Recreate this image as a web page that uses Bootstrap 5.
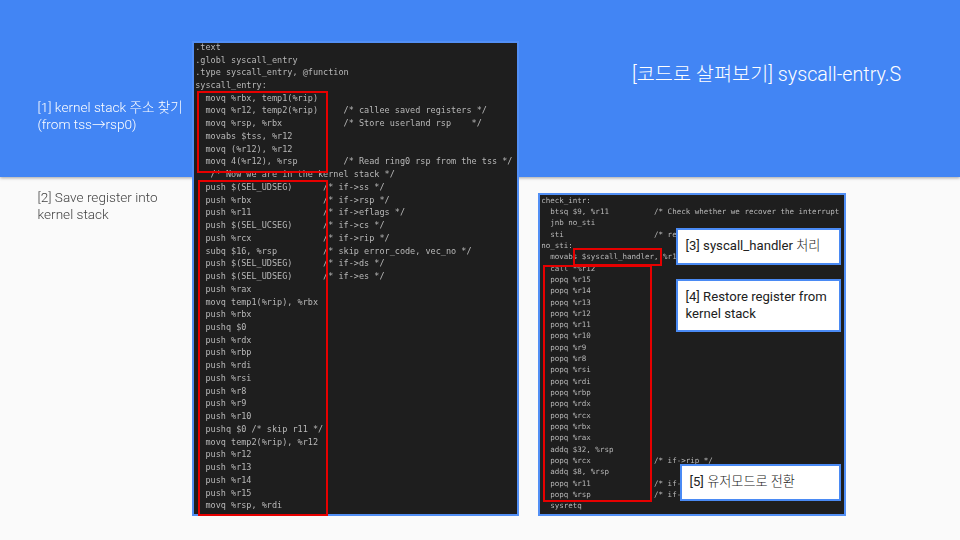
<!DOCTYPE html>
<html lang="ko">
<head>
<meta charset="utf-8">
<title>syscall-entry.S</title>
<link href="https://cdn.jsdelivr.net/npm/bootstrap@5.3.0/dist/css/bootstrap.min.css" rel="stylesheet">
<style>
html,body{margin:0;width:960px;height:540px;overflow:hidden;background:#fafafa}
.slide-canvas{width:960px;height:540px;font-family:Roboto,"Noto Sans CJK KR",sans-serif}
.slide-band{position:absolute;left:0;top:0;width:960px;height:177px;background:#4285f4;box-shadow:0 1px 3px rgba(0,0,0,.35)}
.note-col{width:192px;padding:99px 0 0 37.5px;font-size:13.6px;line-height:16.5px;z-index:1;filter:blur(.2px)}
.note-one{color:#fff;height:90px;white-space:nowrap;font-weight:300}
.note-two{color:#434343;font-weight:300}
.code-panel{background:#1e1e1e;border:2px solid #528ff5;z-index:1}
.panel-left{width:327px;height:475px;margin-top:41px}
.right-col{width:422px;margin-left:19px;z-index:1}
.slide-title{padding:63px 0 0 94px;height:193px;color:#fff;font-size:19.7px;line-height:24px;font-weight:300;white-space:nowrap}
.panel-right{width:308px;height:323px}
.code-text{margin:0;font-family:"DejaVu Sans Mono",monospace;color:#b8b8b8;filter:blur(.5px);overflow:hidden}
.text-left{font-size:8.5px;line-height:12.74px;padding:0 0 0 1.2px;margin-top:-2.2px}
.text-right{font-size:7.5px;line-height:11.31px;padding:0 0 0 1.2px;margin-top:-.3px}
.red-box{position:absolute;border:2px solid #e60000}
.red-a{left:3px;top:48px;width:131px;height:82px}
.red-b{left:4px;top:137px;width:130px;height:336px}
.red-c{left:33px;top:53px;width:89px;height:18px}
.red-d{left:3px;top:69.5px;width:109px;height:237px}
.call-box{position:absolute;background:#fff;border:2px solid #4a8af4;color:#212121;font-size:13.15px;line-height:16.5px;padding:0 0 0 7.5px;display:flex;align-items:center}
.call-a{left:136px;top:33px;width:165px;height:37px}
.call-b{left:136px;top:84px;width:165px;height:53px}
.call-c{left:140px;top:269px;width:161px;height:37px}
.hangul{font-weight:300}
</style>
</head>
<body>
<div class="slide-canvas position-relative d-flex">
  <div class="slide-band"></div>
  <div class="note-col flex-shrink-0 position-relative">
    <div class="note-one">[1] kernel stack 주소 찾기<br>(from tss→rsp0)</div>
    <div class="note-two">[2] Save register into<br>kernel stack</div>
  </div>
  <div class="code-panel panel-left position-relative flex-shrink-0">
<pre class="code-text text-left">.text
.globl syscall_entry
.type syscall_entry, @function
syscall_entry:
  movq %rbx, temp1(%rip)
  movq %r12, temp2(%rip)     /* callee saved registers */
  movq %rsp, %rbx            /* Store userland rsp    */
  movabs $tss, %r12
  movq (%r12), %r12
  movq 4(%r12), %rsp         /* Read ring0 rsp from the tss */
   /* Now we are in the kernel stack */
  push $(SEL_UDSEG)      /* if-&gt;ss */
  push %rbx              /* if-&gt;rsp */
  push %r11              /* if-&gt;eflags */
  push $(SEL_UCSEG)      /* if-&gt;cs */
  push %rcx              /* if-&gt;rip */
  subq $16, %rsp         /* skip error_code, vec_no */
  push $(SEL_UDSEG)      /* if-&gt;ds */
  push $(SEL_UDSEG)      /* if-&gt;es */
  push %rax
  movq temp1(%rip), %rbx
  push %rbx
  pushq $0
  push %rdx
  push %rbp
  push %rdi
  push %rsi
  push %r8
  push %r9
  push %r10
  pushq $0 /* skip r11 */
  movq temp2(%rip), %r12
  push %r12
  push %r13
  push %r14
  push %r15
  movq %rsp, %rdi</pre>
    <div class="red-box red-a"></div>
    <div class="red-box red-b"></div>
  </div>
  <div class="right-col flex-shrink-0 position-relative">
    <div class="slide-title">[코드로 살펴보기] syscall-entry.S</div>
    <div class="code-panel panel-right position-relative">
<pre class="code-text text-right">check_intr:
  btsq $9, %r11          /* Check whether we recover the interrupt
  jnb no_sti
  sti                    /* re-enable interrupts */
no_sti:
  movabs $syscall_handler, %r12
  call *%r12
  popq %r15
  popq %r14
  popq %r13
  popq %r12
  popq %r11
  popq %r10
  popq %r9
  popq %r8
  popq %rsi
  popq %rdi
  popq %rbp
  popq %rdx
  popq %rcx
  popq %rbx
  popq %rax
  addq $32, %rsp
  popq %rcx              /* if-&gt;rip */
  addq $8, %rsp
  popq %r11              /* if-&gt;eflags */
  popq %rsp              /* if-&gt;rsp */
  sysretq</pre>
      <div class="red-box red-c"></div>
      <div class="red-box red-d"></div>
      <div class="call-box call-a"><span>[3] syscall_handler <span class="hangul">처리</span></span></div>
      <div class="call-box call-b">[4] Restore register from<br>kernel stack</div>
      <div class="call-box call-c"><span>[5] <span class="hangul">유저모드로 전환</span></span></div>
    </div>
  </div>
</div>
<script src="https://cdn.jsdelivr.net/npm/bootstrap@5.3.0/dist/js/bootstrap.bundle.min.js"></script>
</body>
</html>
